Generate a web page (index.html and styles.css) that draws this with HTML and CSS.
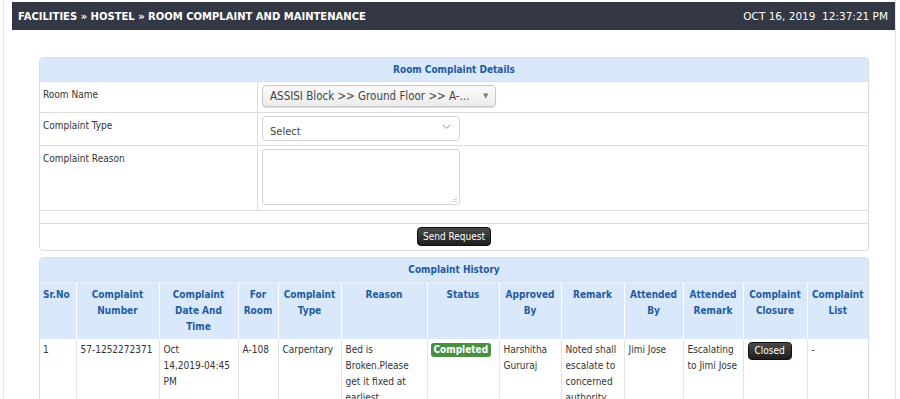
FILE: index.html
```html
<!DOCTYPE html>
<html lang="en">
<head>
    <meta charset="UTF-8">
    <title>Room Complaint And Maintenance</title>
    <link rel="stylesheet" href="styles.css">
</head>
<body>
    <div class="page">

        <!-- Top breadcrumb bar -->
        <div class="topbar">
            <span class="crumbs">FACILITIES &raquo; HOSTEL &raquo; ROOM COMPLAINT AND MAINTENANCE</span>
            <span class="clock">OCT 16, 2019&nbsp;&nbsp;12:37:21 PM</span>
        </div>

        <div class="content">

            <!-- Complaint form -->
            <div class="panel">
                <div class="panel-head">Room Complaint Details</div>
                <table class="form-table">
                    <tr class="row-room">
                        <td class="label">Room Name</td>
                        <td>
                            <div class="fake-select gloss">
                                <span>ASSISI Block &gt;&gt; Ground Floor &gt;&gt; A-...</span>
                                <span class="caret">&#9660;</span>
                            </div>
                        </td>
                    </tr>
                    <tr class="row-type">
                        <td class="label">Complaint Type</td>
                        <td>
                            <div class="fake-select plain">
                                <span>Select</span>
                                <svg class="chev" width="9" height="6" viewBox="0 0 9 6"><path d="M1 1 L4.5 4.5 L8 1" fill="none" stroke="#999" stroke-width="1"/></svg>
                            </div>
                        </td>
                    </tr>
                    <tr class="row-reason">
                        <td class="label">Complaint Reason</td>
                        <td>
                            <div class="fake-textarea">
                                <svg class="grip" width="6" height="6" viewBox="0 0 6 6"><path d="M5 1 V2 M3 3 V4 M5 3 V4 M1 5 V6 M3 5 V6 M5 5 V6" stroke="#aaa" stroke-width="1"/></svg>
                            </div>
                        </td>
                    </tr>
                    <tr class="row-gap"><td colspan="2"></td></tr>
                    <tr class="row-btn">
                        <td colspan="2"><button class="btn-dark">Send Request</button></td>
                    </tr>
                </table>
            </div>

            <!-- Complaint history -->
            <div class="panel history">
                <div class="panel-head">Complaint History</div>
                <table class="hist-table">
                    <colgroup>
                        <col style="width:36px"><col style="width:83px"><col style="width:79px"><col style="width:40px">
                        <col style="width:63px"><col style="width:86px"><col style="width:72px"><col style="width:62px">
                        <col style="width:63px"><col style="width:59px"><col style="width:60px"><col style="width:64px">
                        <col>
                    </colgroup>
                    <thead>
                        <tr>
                            <th class="left">Sr.No</th>
                            <th>Complaint Number</th>
                            <th>Complaint Date And Time</th>
                            <th>For Room</th>
                            <th>Complaint Type</th>
                            <th>Reason</th>
                            <th>Status</th>
                            <th>Approved By</th>
                            <th>Remark</th>
                            <th>Attended By</th>
                            <th>Attended Remark</th>
                            <th>Complaint Closure</th>
                            <th>Complaint List</th>
                        </tr>
                    </thead>
                    <tbody>
                        <tr>
                            <td>1</td>
                            <td>57-1252272371</td>
                            <td>Oct 14,2019&#8209;04:45 PM</td>
                            <td>A-108</td>
                            <td>Carpentary</td>
                            <td>Bed is Broken.Please get it fixed at earliest</td>
                            <td><span class="badge">Completed</span></td>
                            <td>Harshitha Gururaj</td>
                            <td>Noted shall escalate to concerned authority</td>
                            <td>Jimi Jose</td>
                            <td>Escalating to Jimi Jose</td>
                            <td><button class="btn-dark small">Closed</button></td>
                            <td>-</td>
                        </tr>
                    </tbody>
                </table>
            </div>

        </div>
    </div>
</body>
</html>
```

FILE: styles.css
```css
body {
    margin: 0;
    font-family: "DejaVu Sans Condensed", "DejaVu Sans", sans-serif;
    font-stretch: condensed;
    font-size: 10px;
    color: #333;
    background: #fff;
}

.page {
    margin-left: 3px;
    margin-right: 4px;
    border-left: 1px solid #e6e6e6;
    border-right: 1px solid #e6e6e6;
    padding: 2px 0 0 8px;
    height: 397px;
    overflow: hidden;
}

.topbar {
    display: flex;
    justify-content: space-between;
    align-items: center;
    background: #333844;
    color: #fff;
    height: 28px;
    padding: 0 7px 0 6px;
    font-family: "DejaVu Sans", sans-serif;
    font-stretch: normal;
}

.crumbs {
    font-weight: bold;
    font-size: 10px;
}

.clock {
    font-size: 10.5px;
}

.content {
    padding: 27px 26px 0 27px;
}

.panel {
    border: 1px solid #dcdcdc;
    border-radius: 4px;
    overflow: hidden;
}

.panel.history {
    margin-top: 6px;
}

.panel-head {
    background: #dae8fc;
    color: #1f5c9e;
    font-weight: bold;
    text-align: center;
    height: 23px;
    line-height: 24px;
    border-bottom: 1px solid #d4dff0;
}

table {
    width: 100%;
    border-collapse: collapse;
}

.form-table td {
    border-top: 1px solid #ddd;
    vertical-align: top;
    padding: 0;
}

.form-table tr:first-child td {
    border-top: none;
}

.form-table .label {
    width: 214px;
    border-right: 1px solid #ddd;
    padding: 7px 0 0 3px;
}

.form-table td + td {
    padding-left: 4px;
}

.row-room { height: 30px; }
.row-type { height: 33px; }
.row-reason { height: 65px; }
.row-gap { height: 13px; }
.row-btn { height: 27px; }

.row-btn td {
    text-align: center;
    vertical-align: middle;
}

.fake-select {
    display: flex;
    justify-content: space-between;
    box-sizing: border-box;
    border-radius: 4px;
    color: #444;
    white-space: nowrap;
    font-size: 11px;
}

.fake-select.gloss {
    width: 234px;
    height: 22px;
    margin-top: 3px;
    align-items: center;
    padding: 0 7px 0 7px;
    font-size: 11.5px;
    border: 1px solid #c8c8c8;
    background: linear-gradient(#fafafa, #ececec);
    box-shadow: 0 1px 1px rgba(0, 0, 0, 0.15);
}

.caret {
    font-size: 7px;
    color: #777;
}

.fake-select.plain {
    width: 198px;
    height: 25px;
    margin-top: 3px;
    align-items: flex-end;
    padding: 0 8px 2px 7px;
    border: 1px solid #d4d4d4;
    background: #fff;
}

.chev {
    align-self: center;
}

.fake-textarea {
    position: relative;
    box-sizing: border-box;
    width: 198px;
    height: 56px;
    margin-top: 3px;
    border: 1px solid #d4d4d4;
    border-radius: 3px;
}

.grip {
    position: absolute;
    right: 2px;
    bottom: 2px;
}

.btn-dark {
    font-family: "DejaVu Sans Condensed", "DejaVu Sans", sans-serif;
    font-stretch: condensed;
    font-size: 10px;
    color: #fff;
    background: linear-gradient(#4a4a4a, #1e1e1e);
    border: 1px solid #111;
    border-radius: 4px;
    padding: 0 5px;
    height: 19px;
}

.btn-dark.small {
    height: 18px;
    padding: 0 6px;
}

.hist-table {
    table-layout: fixed;
}

.hist-table th {
    background: #dae8fc;
    color: #1f5c9e;
    font-weight: bold;
    text-align: center;
    vertical-align: top;
    line-height: 16px;
    height: 56px;
    padding: 4px 2px 0;
    box-sizing: border-box;
    border-left: 1px solid #fff;
    border-top: 1px solid #eef3fb;
}

.hist-table th:first-child {
    border-left: none;
}

.hist-table th.left {
    text-align: left;
    padding-left: 3px;
}

.hist-table td {
    border-left: 1px solid #e3e3e3;
    vertical-align: top;
    line-height: 16px;
    padding: 3px 4px 4px 4px;
}

.hist-table td:first-child {
    border-left: none;
    padding-left: 3px;
}

.badge {
    display: inline-block;
    background: #4a8f3f;
    color: #fff;
    font-weight: bold;
    border-radius: 3px;
    padding: 0 3px;
    line-height: 14px;
    margin-left: -1px;
}
```
